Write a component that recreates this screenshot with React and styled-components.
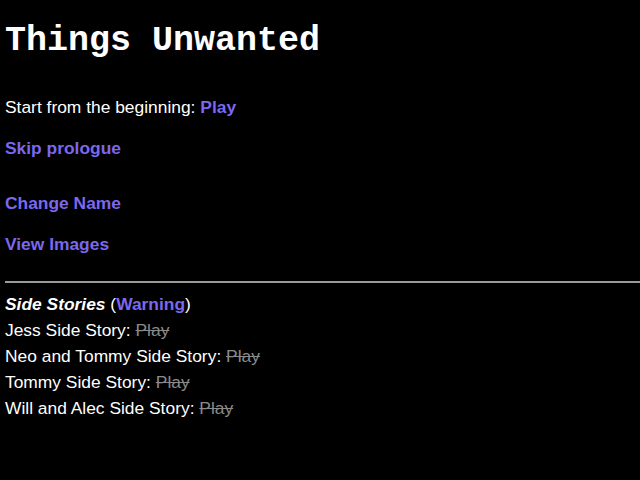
import React from 'react';
import styled, { createGlobalStyle } from 'styled-components';

const GlobalStyle = createGlobalStyle`
  html, body {
    margin: 0;
    background: #000;
  }
  body {
    padding: 0 5px;
    color: #fff;
    font-family: "Liberation Sans", Arial, sans-serif;
    font-size: 17.4px;
    overflow: hidden;
  }
`;

const Title = styled.h1`
  margin: 0;
  padding-top: 22px;
  font-family: "Liberation Mono", "Courier New", monospace;
  font-weight: bold;
  font-size: 35px;
  line-height: 38px;
`;

const Line = styled.p`
  margin: ${p => p.$top || 0}px 0 0;
  line-height: 24px;
`;

const Action = styled.a`
  color: #7b68ee;
  font-weight: bold;
  text-decoration: none;
  cursor: pointer;
`;

const Rule = styled.hr`
  margin: 25px -5px 0 0;
  border: 0;
  height: 2px;
  background: #9a9a9a;
`;

const SideList = styled.div`
  display: flex;
  flex-direction: column;
  margin-top: 8px;
`;

const SideRow = styled.div`
  line-height: 26px;
`;

const Heading = styled.em`
  font-weight: bold;
`;

const Locked = styled.span`
  color: #8a8a8a;
  text-decoration: line-through;
`;

const sideStories = [
  'Jess Side Story',
  'Neo and Tommy Side Story',
  'Tommy Side Story',
  'Will and Alec Side Story'
];

const App = () => (
  <>
    <GlobalStyle />
    <Title>Things Unwanted</Title>
    <Line $top={35}>
      Start from the beginning: <Action>Play</Action>
    </Line>
    <Line $top={17}>
      <Action>Skip prologue</Action>
    </Line>
    <Line $top={31}>
      <Action>Change Name</Action>
    </Line>
    <Line $top={17}>
      <Action>View Images</Action>
    </Line>
    <Rule />
    <SideList>
      <SideRow>
        <Heading>Side Stories</Heading> (<Action>Warning</Action>)
      </SideRow>
      {sideStories.map(name => (
        <SideRow key={name}>
          {name}: <Locked>Play</Locked>
        </SideRow>
      ))}
    </SideList>
  </>
);

export default App;
